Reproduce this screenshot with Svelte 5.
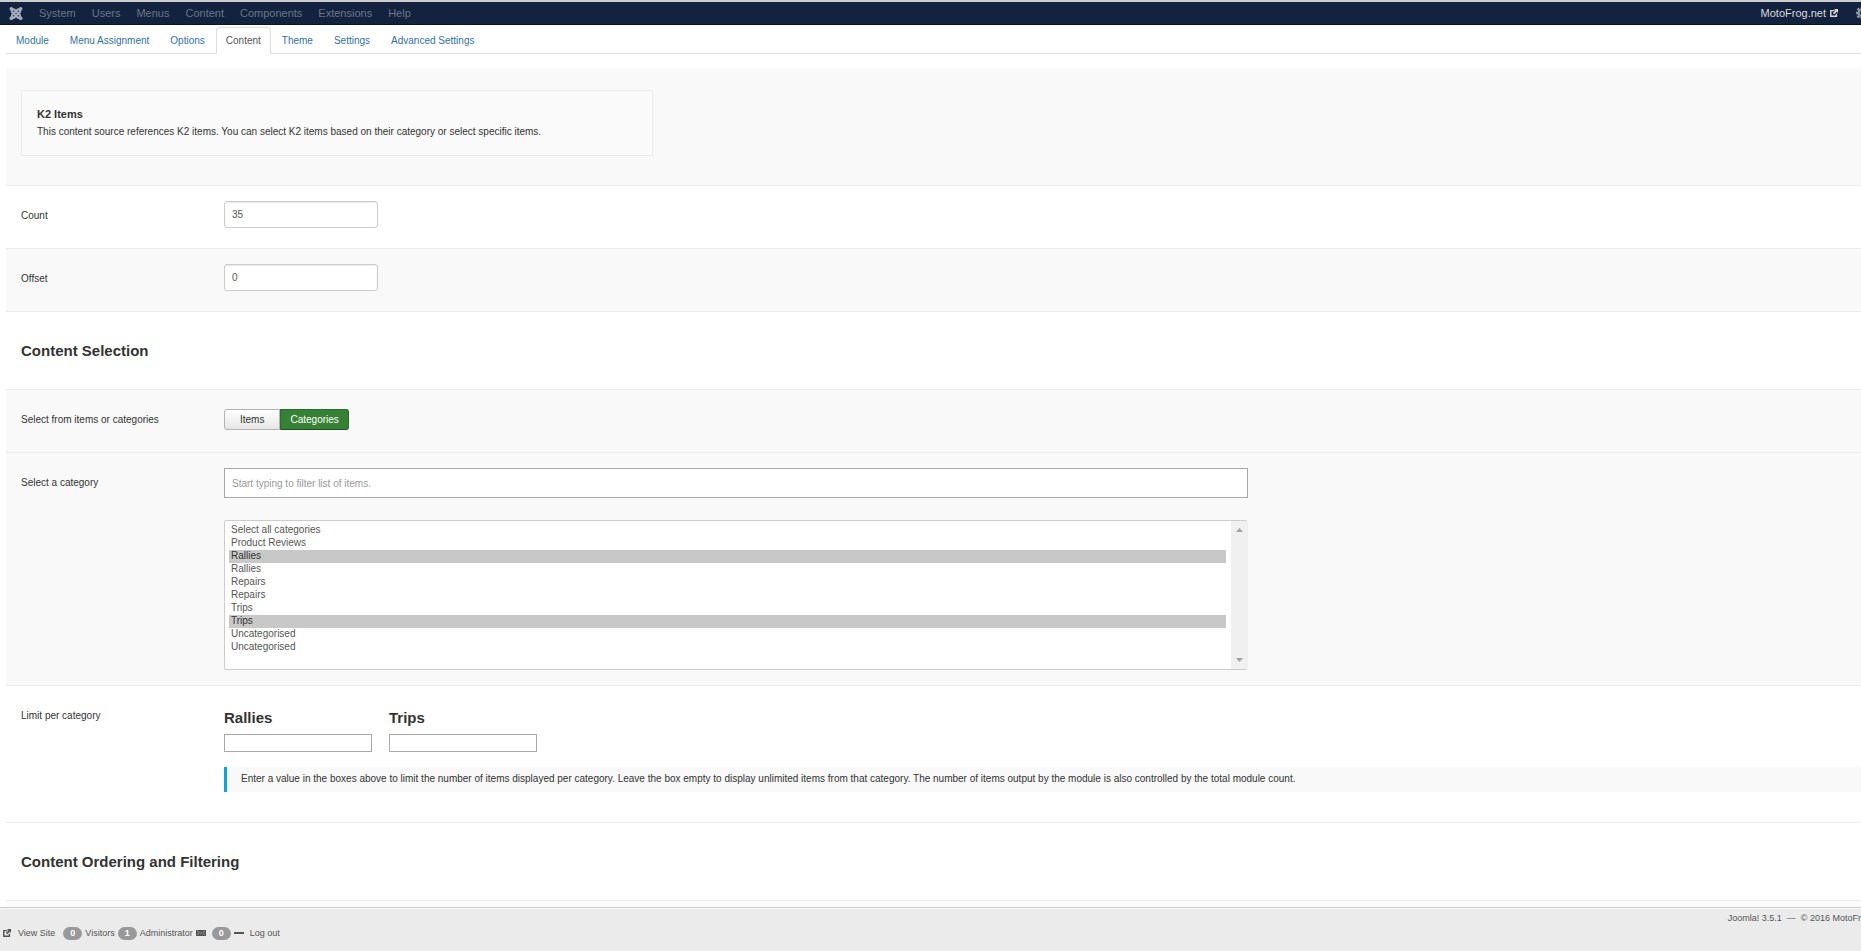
<script>
  const menus = ['System', 'Users', 'Menus', 'Content', 'Components', 'Extensions', 'Help']
  const tabs = ['Module', 'Menu Assignment', 'Options', 'Content', 'Theme', 'Settings', 'Advanced Settings']
  const categories = [
    'Select all categories', 'Product Reviews', 'Rallies', 'Rallies', 'Repairs',
    'Repairs', 'Trips', 'Trips', 'Uncategorised', 'Uncategorised',
  ]

  let activeTab = $state('Content')
  let source = $state('Categories')
  let selected = $state([2, 7])
  let count = $state('35')
  let offset = $state('0')
  let filter = $state('')
</script>

{#snippet external()}
  <svg class="ext" viewBox="0 0 10 10" aria-hidden="true">
    <path d="M5.500 2H1v7h7V6" fill="none" stroke="currentColor" stroke-width="1.8" />
    <path d="M5 0h5v5L8.400 3.400 5.200 6.600 3.600 5 6.800 1.800Z" fill="currentColor" />
  </svg>
{/snippet}

<div class="page">
  <nav class="topbar">
    <a class="logo" href="#home" aria-label="Joomla">
      <svg viewBox="0 0 14 14">
        <g fill="none" stroke="currentColor" stroke-width="2.4">
          <path d="M2 2.500 Q4.500 1.500 6 3.500L10.500 8M12 2.500Q9.500 1.500 8 3.500L3.500 8" />
          <path d="M2 11.500Q4.500 12.500 6 10.500L10.500 6M12 11.500Q9.500 12.500 8 10.500L3.500 6" />
          <path d="M3 3Q2 5 3.500 6.500M11 3Q12 5 10.500 6.500M3 11Q2 9 3.500 7.500M11 11Q12 9 10.500 7.500" />
        </g>
        <g fill="currentColor">
          <circle cx="2" cy="2" r="2" /><circle cx="12" cy="2" r="2" />
          <circle cx="2" cy="12" r="2" /><circle cx="12" cy="12" r="2" />
        </g>
      </svg>
    </a>
    {#each menus as item}
      <a class="menu" href="#{item}">{item}</a>
    {/each}
    <a class="site" href="#site">MotoFrog.net {@render external()}</a>
    <button class="gear" aria-label="User menu">
      <svg viewBox="0 0 12 12">
        <circle cx="6" cy="6" r="3.300" fill="none" stroke="currentColor" stroke-width="2.4" />
        <path d="M6 0v2M6 10v2M0 6h2M10 6h2M1.500 1.500l1.700 1.700M8.800 8.800l1.700 1.700M1.500 10.500l1.700-1.700M8.800 3.200l1.700-1.700" stroke="currentColor" stroke-width="2.600" />
      </svg>
    </button>
  </nav>

  <main>
    <div class="tabs">
      {#each tabs as tab}
        <a href="#{tab}" class:active={activeTab === tab} onclick={() => (activeTab = tab)}>{tab}</a>
      {/each}
    </div>

    <section class="row alt intro">
      <div class="info">
        <h4>K2 Items</h4>
        <p>This content source references K2 items. You can select K2 items based on their category or select specific items.</p>
      </div>
    </section>

    <section class="row">
      <label for="count">Count</label>
      <input id="count" class="text" type="text" bind:value={count} />
    </section>

    <section class="row alt">
      <label for="offset">Offset</label>
      <input id="offset" class="text" type="text" bind:value={offset} />
    </section>

    <section class="row title"><h3>Content Selection</h3></section>

    <section class="row alt">
      <span class="label" id="source">Select from items or categories</span>
      <div class="switch" role="group" aria-labelledby="source">
        {#each ['Items', 'Categories'] as option}
          <button class:on={source === option} onclick={() => (source = option)}>{option}</button>
        {/each}
      </div>
    </section>

    <section class="row alt">
      <label for="categories">Select a category</label>
      <div class="picker">
        <input type="text" aria-label="Filter" placeholder="Start typing to filter list of items." bind:value={filter} />
        <div class="listbox">
          <select id="categories" multiple size="10" bind:value={selected}>
            {#each categories as name, i}
              <option value={i}>{name}</option>
            {/each}
          </select>
          <div class="scroll" aria-hidden="true">
            <svg viewBox="0 0 7 4"><path d="M0 4h7L3.500 0Z" fill="currentColor" /></svg>
            <svg viewBox="0 0 7 4"><path d="M0 0h7L3.500 4Z" fill="currentColor" /></svg>
          </div>
        </div>
      </div>
    </section>

    <section class="row limits">
      <span class="label">Limit per category</span>
      <div class="limit">
        <div class="boxes">
          {#each ['Rallies', 'Trips'] as name}
            <div>
              <label class="heading" for="limit-{name}">{name}</label>
              <input id="limit-{name}" type="text" />
            </div>
          {/each}
        </div>
        <p class="tip">Enter a value in the boxes above to limit the number of items displayed per category. Leave the box empty to display unlimited items from that category. The number of items output by the module is also controlled by the total module count.</p>
      </div>
    </section>

    <section class="row title"><h3>Content Ordering and Filtering</h3></section>
    <section class="row alt last"></section>
  </main>

  <footer>
    <div class="status">
      <a class="view" href="#view">{@render external()}<span>View Site</span></a>
      <span class="badge">0</span><span>Visitors</span>
      <span class="badge">1</span><span>Administrator</span>
      <svg class="mail" viewBox="0 0 10 6" aria-hidden="true">
        <path d="M0 0h10v6H0Z" fill="currentColor" />
        <path d="M1 1l4 2.500L9 1M1 5l2-1.500M9 5L7 3.500" fill="none" stroke="#aaa" stroke-width="0.700" />
      </svg>
      <span class="badge">0</span>
      <svg class="dash" viewBox="0 0 10 2" aria-hidden="true"><path d="M0 0h10v2H0Z" fill="currentColor" /></svg>
      <a href="#logout">Log out</a>
    </div>
    <div class="version">Joomla! 3.5.1 &nbsp;—&nbsp; © 2016 MotoFr</div>
  </footer>
</div>

<style>
  :global(body) {
    overflow: hidden;
    background: #fff;
  }

  .page {
    display: flex;
    flex-direction: column;
    height: 100vh;
    overflow: hidden;
    font: 10px/14px "Liberation Sans", Arial, sans-serif;
    color: #333;
  }

  * {
    box-sizing: border-box;
  }

  h3,
  h4,
  p {
    margin: 0;
  }

  a {
    color: inherit;
    text-decoration: none;
  }

  input,
  select,
  button {
    margin: 0;
    font: inherit;
    color: #555;
  }

  svg {
    display: block;
    flex: none;
  }

  .ext {
    width: 8px;
    height: 8px;
  }

  .topbar {
    display: flex;
    flex: none;
    align-items: center;
    gap: 16px;
    height: 25px;
    padding-left: 9px;
    border-top: 2px solid #ccc;
    border-bottom: 1px solid #0b1629;
    background: #13233f;
    color: #6b7587;
    font-size: 11px;
  }

  .logo {
    color: #a3abb8;

    svg {
      width: 14px;
      height: 13px;
    }
  }

  .site {
    display: flex;
    align-items: center;
    gap: 4px;
    margin-left: auto;
    margin-right: 2px;
    color: #d9d9d9;
  }

  .gear {
    flex: none;
    width: 5px;
    overflow: hidden;
    padding: 0;
    border: 0;
    background: none;
    color: #8d96a5;

    svg {
      width: 12px;
      height: 12px;
    }
  }

  main {
    flex: 1;
    min-height: 0;
    overflow: hidden;
    padding-left: 6px;
  }

  .tabs {
    display: flex;
    height: 29px;
    margin-bottom: 14px;
    padding-top: 2px;
    border-bottom: 1px solid #ddd;
    color: #3071a9;

    a {
      height: 27px;
      margin-right: 1px;
      padding: 6px 9px;
      border: 1px solid transparent;
      border-radius: 4px 4px 0 0;
    }

    .active {
      border-color: #ddd;
      border-bottom-color: #fff;
      background: #fff;
      color: #555;
    }
  }

  .row {
    display: flex;
    align-items: flex-start;
    min-height: 63px;
    padding: 15px 0 15px 15px;
    border-bottom: 1px solid #ececec;
  }

  .alt {
    background: #f9f9f9;
  }

  .intro {
    min-height: 118px;
    padding-top: 22px;
  }

  .info {
    flex: 0 1 632px;
    height: 66px;
    padding: 15px;
    border: 1px solid #ececec;
    background: #fafafa;

    h4 {
      margin-bottom: 1px;
      line-height: 17px;
      font-size: 11px;
    }

    p {
      line-height: 16px;
    }
  }

  .row > label,
  .label {
    flex: none;
    width: 203px;
    padding-top: 8px;
  }

  .text {
    width: 154px;
    height: 27px;
    padding: 3px 7px;
    border: 1px solid #ccc;
    border-radius: 3px;
    background: #fff;
    box-shadow: inset 0 1px 1px rgba(0, 0, 0, 0.08);
  }

  .title {
    align-items: center;
    min-height: 78px;
  }

  h3,
  .heading {
    font-size: 15px;
    font-weight: bold;
    line-height: 20px;
  }

  .switch {
    display: flex;
    margin-top: 4px;

    button {
      height: 21px;
      padding: 0 15px;
      border: 1px solid #b3b3b3;
      border-radius: 3px 0 0 3px;
      background: linear-gradient(#fff, #e6e6e6);
      color: #333;
    }

    button + button {
      padding: 0 9px;
      border-radius: 0 3px 3px 0;
    }

    .on {
      border-color: #2d6a2d #2d6a2d #1f4d1f;
      background: #378137;
      color: #fff;
    }
  }

  .picker {
    width: calc(55% + 12px);
    min-width: 0;

    > input {
      display: block;
      width: 100%;
      height: 30px;
      margin-bottom: 22px;
      padding: 0 7px;
      border: 1px solid #a9a9a9;
      background: #fff;
    }

    > input::placeholder {
      color: #999;
    }
  }

  .listbox {
    display: flex;
    height: 150px;
    overflow: hidden;
    border: 1px solid #ccc;
    border-right-color: #f0f0f0;
    border-radius: 3px;
    background: #fff;
  }

  select {
    flex: 1;
    min-width: 0;
    height: 148px;
    overflow: hidden;
    padding: 3px 5px 3px 4px;
    border: 0;
    outline: 0;
    background: #fff;
  }

  option {
    min-height: 0;
    height: 13px;
    padding: 0 2px;
    line-height: 13px;
  }

  option:checked {
    background: #c8c8c8 linear-gradient(#c8c8c8, #c8c8c8);
    color: #333;
  }

  .scroll {
    display: flex;
    flex-direction: column;
    align-items: center;
    justify-content: space-between;
    width: 16px;
    padding: 7px 0;
    background: #f0f0f0;
    color: #a3a3a3;

    svg {
      width: 7px;
      height: 4px;
    }
  }

  .limits {
    min-height: 137px;
    padding-top: 22px;

    .label {
      padding-top: 1px;
    }
  }

  .limit {
    flex: 1;
  }

  .boxes {
    display: flex;
    gap: 17px;
    margin-bottom: 15px;

    .heading {
      display: block;
      margin-bottom: 6px;
    }

    input {
      display: block;
      width: 148px;
      height: 18px;
      border: 1px solid #a9a9a9;
      background: #fff;
    }
  }

  .tip {
    padding: 5px 14px 6px;
    border-left: 3px solid #08a5e1;
    background: #f9f9f9;
  }

  .last {
    opacity: 0.6;
  }

  footer {
    display: flex;
    flex: none;
    justify-content: space-between;
    height: 44px;
    padding-left: 3px;
    overflow: hidden;
    border-top: 1px solid #ccc;
    background: #ebebeb;
    box-shadow: inset 0 1px #fafafa;
    color: #555;
    font-size: 9px;
    white-space: nowrap;
  }

  .status {
    display: flex;
    align-items: center;
    gap: 3px;
    padding-top: 7px;
  }

  .view {
    display: flex;
    align-items: center;
    gap: 7px;
    margin-right: 5px;
  }

  .badge {
    min-width: 19px;
    border-radius: 7px;
    background: #999;
    color: #fff;
    font-weight: bold;
    line-height: 13px;
    text-align: center;
  }

  .mail {
    width: 10px;
    height: 6px;
    margin-right: 3px;
  }

  .dash {
    width: 10px;
    height: 2px;
    margin-right: 3px;
  }

  .version {
    flex: none;
    padding-top: 3px;
  }
</style>
